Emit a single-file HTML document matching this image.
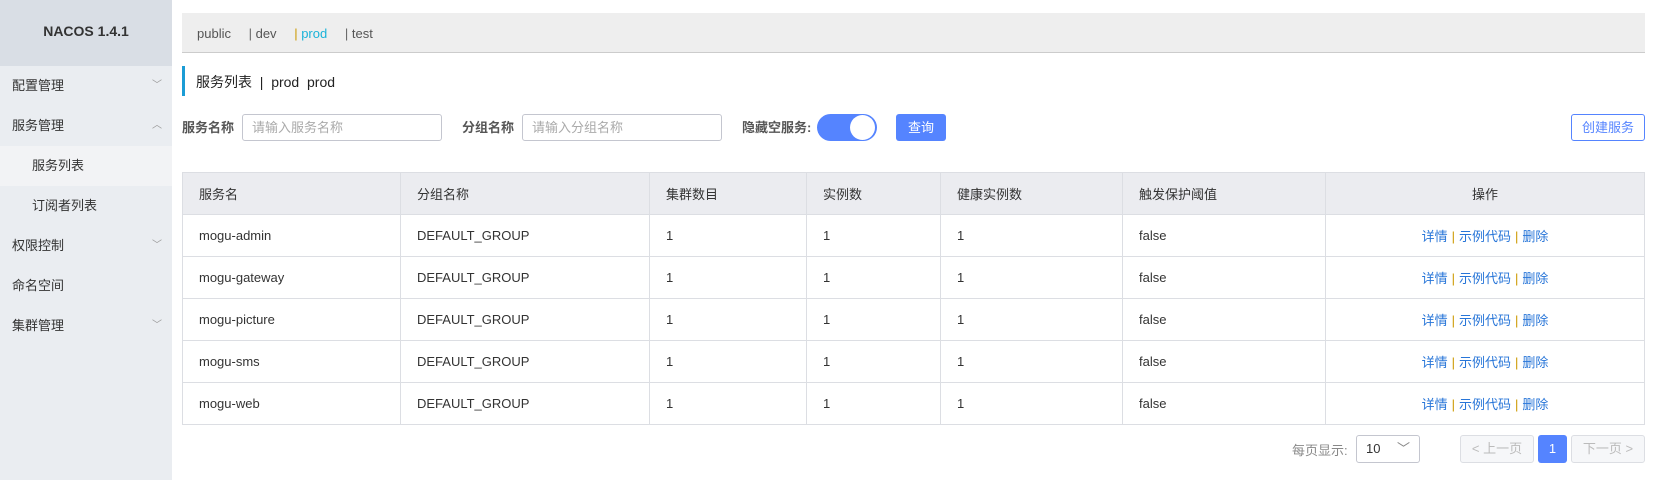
<!DOCTYPE html>
<html><head><meta charset="utf-8"><style>
*{box-sizing:border-box;margin:0;padding:0}
body{width:1657px;height:480px;background:#fff;font-family:"Liberation Sans","Noto Sans CJK SC",sans-serif;font-size:13px;color:#333;position:relative;overflow:hidden}
.side{position:absolute;left:0;top:0;width:172px;height:480px;background:#eaedf1}
.logo{height:66px;background:#d9dee5;text-align:center;line-height:62px;font-weight:bold;font-size:14px;color:#333}
.mi{height:40px;line-height:40px;padding-left:12px;font-size:13px;color:#333;position:relative}
.mi.sub{padding-left:32px}
.mi.act{background:#f2f3f5}
.mi .ar{position:absolute;right:10px;top:0;color:#999;font-size:10px}
.abs{position:absolute}
.tabs{left:182px;top:13px;width:1463px;height:40px;background:#eeeeee;border-bottom:1px solid #ccc;font-size:13px;line-height:42px;padding-left:15px;color:#555}
.title{left:182px;top:66px;height:30px;border-left:3px solid #1b9cd5;padding-left:11px;line-height:32px;font-size:14px;color:#222}
.lbl{font-weight:bold;color:#555;font-size:13px}
.inp{border:1px solid #c4c6cf;border-radius:3px;height:27px;line-height:25px;padding-left:9px;color:#aaa;font-size:13px;background:#fff}
.btn{background:#5584ff;color:#fff;border-radius:3px;text-align:center;line-height:27px;height:27px}
table{position:absolute;left:182px;top:172px;width:1463px;border-collapse:collapse;font-size:13px}
td,th{border:1px solid #dcdee3;height:42px;padding-left:16px;text-align:left;font-weight:normal;color:#333}
th{background:#ebecf0}
a{color:#2775d8;text-decoration:none}
.sep{color:#c90;margin:0 4px}
.pg{height:28px;border:1px solid #dcdee3;border-radius:3px;line-height:26px;text-align:center;color:#bbb;background:#f6f7f9}
</style></head><body>
<div class="side">
<div class="logo">NACOS 1.4.1</div>
<div class="mi">配置管理<span class="ar">﹀</span></div>
<div class="mi">服务管理<span class="ar">︿</span></div>
<div class="mi sub act">服务列表</div>
<div class="mi sub">订阅者列表</div>
<div class="mi">权限控制<span class="ar">﹀</span></div>
<div class="mi">命名空间</div>
<div class="mi">集群管理<span class="ar">﹀</span></div>
</div>
<div class="abs tabs"><span>public</span> <span style="margin-left:14px"><span style="color:#666">|</span> dev</span> <span style="margin-left:14px;color:#1ab3d9"><span style="color:#c90">|</span> prod</span> <span style="margin-left:14px"><span style="color:#666">|</span> test</span></div>
<div class="abs title">服务列表 &nbsp;|&nbsp; prod &nbsp;prod</div>
<div class="abs lbl" style="left:182px;top:117px">服务名称</div>
<div class="abs inp" style="left:242px;top:114px;width:200px">请输入服务名称</div>
<div class="abs lbl" style="left:462px;top:117px">分组名称</div>
<div class="abs inp" style="left:522px;top:114px;width:200px">请输入分组名称</div>
<div class="abs lbl" style="left:742px;top:117px">隐藏空服务:</div>
<div class="abs" style="left:817px;top:114px;width:60px;height:27px;border-radius:14px;background:#5584ff"><div style="position:absolute;right:2px;top:1px;width:25px;height:25px;border-radius:13px;background:#fff"></div></div>
<div class="abs btn" style="left:896px;top:114px;width:50px">查询</div>
<div class="abs" style="left:1571px;top:114px;width:74px;height:27px;border:1px solid #5584ff;border-radius:3px;color:#5584ff;text-align:center;line-height:25px">创建服务</div>
<table>
<tr><th style="width:218px">服务名</th><th style="width:249px">分组名称</th><th style="width:157px">集群数目</th><th style="width:134px">实例数</th><th style="width:182px">健康实例数</th><th style="width:203px">触发保护阈值</th><th style="text-align:center;padding:0">操作</th></tr>
<tr><td>mogu-admin</td><td>DEFAULT_GROUP</td><td>1</td><td>1</td><td>1</td><td>false</td><td style="text-align:center;padding:0"><a>详情</a><span class="sep">|</span><a>示例代码</a><span class="sep">|</span><a>删除</a></td></tr>
<tr><td>mogu-gateway</td><td>DEFAULT_GROUP</td><td>1</td><td>1</td><td>1</td><td>false</td><td style="text-align:center;padding:0"><a>详情</a><span class="sep">|</span><a>示例代码</a><span class="sep">|</span><a>删除</a></td></tr>
<tr><td>mogu-picture</td><td>DEFAULT_GROUP</td><td>1</td><td>1</td><td>1</td><td>false</td><td style="text-align:center;padding:0"><a>详情</a><span class="sep">|</span><a>示例代码</a><span class="sep">|</span><a>删除</a></td></tr>
<tr><td>mogu-sms</td><td>DEFAULT_GROUP</td><td>1</td><td>1</td><td>1</td><td>false</td><td style="text-align:center;padding:0"><a>详情</a><span class="sep">|</span><a>示例代码</a><span class="sep">|</span><a>删除</a></td></tr>
<tr><td>mogu-web</td><td>DEFAULT_GROUP</td><td>1</td><td>1</td><td>1</td><td>false</td><td style="text-align:center;padding:0"><a>详情</a><span class="sep">|</span><a>示例代码</a><span class="sep">|</span><a>删除</a></td></tr>
</table>
<div class="abs" style="left:1292px;top:440px;color:#888">每页显示:</div>
<div class="abs" style="left:1356px;top:435px;width:64px;height:28px;border:1px solid #c4c6cf;border-radius:3px;line-height:26px;padding-left:9px;color:#333">10<span style="position:absolute;right:9px;top:0;color:#888">﹀</span></div>
<div class="abs pg" style="left:1460px;top:435px;width:74px">&lt; 上一页</div>
<div class="abs btn" style="left:1538px;top:435px;width:29px;height:28px;line-height:28px">1</div>
<div class="abs pg" style="left:1571px;top:435px;width:74px">下一页 &gt;</div>
</body></html>
